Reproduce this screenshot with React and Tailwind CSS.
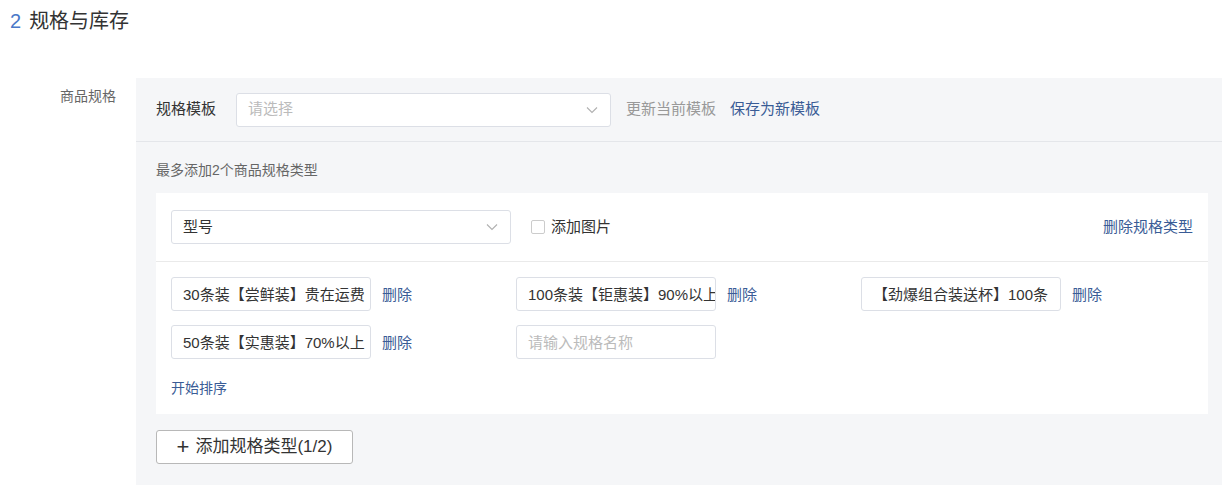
import { useState } from "react";

const font = { fontFamily: '"Liberation Sans", "Noto Sans CJK SC", sans-serif' };

const Chevron = () => (
    <svg width="14" height="14" viewBox="0 0 14 14" fill="none" className="shrink-0">
        <path d="M2 4.5 L7 9.5 L12 4.5" stroke="#b0b0b0" strokeWidth="1.1" />
    </svg>
);

const SpecInput = ({ value, placeholder, onRemove }) => (
    <div className="flex items-center">
        <div className="w-[200px] h-[34px] shrink-0 border border-[#dcdfe6] rounded-[3px] bg-white px-[11px] flex items-center overflow-hidden whitespace-nowrap text-[15px] leading-none">
            {value ? (
                <span className="text-[#333]">{value}</span>
            ) : (
                <span className="text-[#bbb]">{placeholder}</span>
            )}
        </div>
        {onRemove && (
            <button className="ml-[11px] text-[15px] text-[#3a5c96] leading-none whitespace-nowrap">删除</button>
        )}
    </div>
);

const App = () => {
    const [addImage, setAddImage] = useState(false);

    return (
        <div className="w-[1222px] h-[485px] bg-white overflow-hidden" style={font}>
            <div className="h-[42px] pl-[10px] flex items-center text-[20px] text-[#333]">
                <span className="text-[#4a78c8] mr-[8px]">2</span>
                <span>规格与库存</span>
            </div>
            <div className="flex mt-[36px]">
                <div className="w-[136px] shrink-0 pr-[20px] pt-[9px] text-right text-[14px] text-[#666] leading-[18px]">
                    商品规格
                </div>
                <div className="flex-1 min-w-0 bg-[#f5f6f8] h-[407px]">
                    <div className="flex items-center h-[64px] px-[20px] border-b border-[#e4e6ea]">
                        <span className="text-[15px] text-[#333] w-[80px]">规格模板</span>
                        <div className="w-[375px] h-[34px] bg-white border border-[#dcdfe6] rounded-[3px] flex items-center justify-between px-[11px]">
                            <span className="text-[15px] text-[#bbb]">请选择</span>
                            <Chevron />
                        </div>
                        <span className="ml-[15px] text-[15px] text-[#999]">更新当前模板</span>
                        <span className="ml-[14px] text-[15px] text-[#3a5c96]">保存为新模板</span>
                    </div>
                    <div className="pl-[20px] pr-[14px]">
                        <div className="h-[51px] flex items-center text-[14px] text-[#666] pt-[6px]">
                            最多添加2个商品规格类型
                        </div>
                        <div className="bg-white">
                            <div className="h-[69px] flex items-center px-[15px] border-b border-[#eaeaea]">
                                <div className="w-[340px] h-[34px] border border-[#dcdfe6] rounded-[3px] flex items-center justify-between px-[11px]">
                                    <span className="text-[15px] text-[#333]">型号</span>
                                    <Chevron />
                                </div>
                                <label className="ml-[20px] flex items-center cursor-pointer">
                                    <input
                                        type="checkbox"
                                        checked={addImage}
                                        onChange={(e) => setAddImage(e.target.checked)}
                                        className="appearance-none w-[14px] h-[14px] border border-[#ccc] rounded-[2px] bg-white"
                                    />
                                    <span className="ml-[6px] text-[15px] text-[#333]">添加图片</span>
                                </label>
                                <span className="ml-auto text-[15px] text-[#3a5c96]">删除规格类型</span>
                            </div>
                            <div className="px-[15px] pt-[15px] pb-[17px]">
                                <div className="grid grid-cols-[345px_345px_auto] gap-y-[14px]">
                                    <SpecInput value="30条装【尝鲜装】贵在运费" onRemove />
                                    <SpecInput value="100条装【钜惠装】90%以上" onRemove />
                                    <SpecInput value="【劲爆组合装送杯】100条" onRemove />
                                    <SpecInput value="50条装【实惠装】70%以上" onRemove />
                                    <SpecInput placeholder="请输入规格名称" />
                                </div>
                                <div className="mt-[20px] text-[14px] text-[#3a5c96] leading-[18px]">开始排序</div>
                            </div>
                        </div>
                        <button className="mt-[16px] h-[34px] w-[197px] border border-[#b8b8b8] rounded-[3px] bg-white flex items-center justify-center text-[17px] text-[#333]">
                            <span className="text-[22px] font-light mr-[6px] leading-none">+</span>
                            添加规格类型(1/2)
                        </button>
                    </div>
                </div>
            </div>
        </div>
    );
};

export default App;
